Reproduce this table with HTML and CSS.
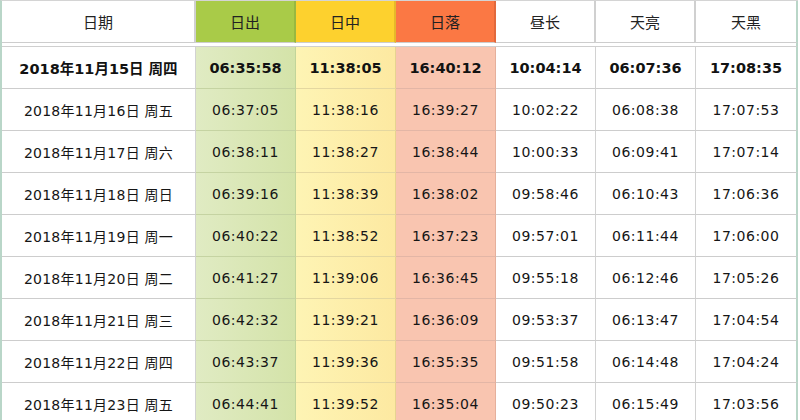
FILE: index.html
```html
<!DOCTYPE html>
<html lang="zh-CN">
<head>
<meta charset="utf-8">
<title>日出日落时间表</title>
<link rel="stylesheet" href="styles.css">
</head>
<body>
<table class="sun">
  <colgroup>
    <col class="c-date"><col class="c-t"><col class="c-t"><col class="c-t"><col class="c-t"><col class="c-t"><col class="c-last">
  </colgroup>
  <thead>
    <tr>
      <th>日期</th>
      <th class="h-rise">日出</th>
      <th class="h-noon">日中</th>
      <th class="h-set">日落</th>
      <th>昼长</th>
      <th>天亮</th>
      <th>天黑</th>
    </tr>
    <tr class="spacer"><td colspan="7"></td></tr>
  </thead>
  <tbody>
    <tr class="today">
      <td class="date">2018年11月15日 周四</td>
      <td class="rise">06:35:58</td><td class="noon">11:38:05</td><td class="set">16:40:12</td>
      <td>10:04:14</td><td>06:07:36</td><td>17:08:35</td>
    </tr>
    <tr>
      <td class="date">2018年11月16日 周五</td>
      <td class="rise">06:37:05</td><td class="noon">11:38:16</td><td class="set">16:39:27</td>
      <td>10:02:22</td><td>06:08:38</td><td>17:07:53</td>
    </tr>
    <tr>
      <td class="date">2018年11月17日 周六</td>
      <td class="rise">06:38:11</td><td class="noon">11:38:27</td><td class="set">16:38:44</td>
      <td>10:00:33</td><td>06:09:41</td><td>17:07:14</td>
    </tr>
    <tr>
      <td class="date">2018年11月18日 周日</td>
      <td class="rise">06:39:16</td><td class="noon">11:38:39</td><td class="set">16:38:02</td>
      <td>09:58:46</td><td>06:10:43</td><td>17:06:36</td>
    </tr>
    <tr>
      <td class="date">2018年11月19日 周一</td>
      <td class="rise">06:40:22</td><td class="noon">11:38:52</td><td class="set">16:37:23</td>
      <td>09:57:01</td><td>06:11:44</td><td>17:06:00</td>
    </tr>
    <tr>
      <td class="date">2018年11月20日 周二</td>
      <td class="rise">06:41:27</td><td class="noon">11:39:06</td><td class="set">16:36:45</td>
      <td>09:55:18</td><td>06:12:46</td><td>17:05:26</td>
    </tr>
    <tr>
      <td class="date">2018年11月21日 周三</td>
      <td class="rise">06:42:32</td><td class="noon">11:39:21</td><td class="set">16:36:09</td>
      <td>09:53:37</td><td>06:13:47</td><td>17:04:54</td>
    </tr>
    <tr>
      <td class="date">2018年11月22日 周四</td>
      <td class="rise">06:43:37</td><td class="noon">11:39:36</td><td class="set">16:35:35</td>
      <td>09:51:58</td><td>06:14:48</td><td>17:04:24</td>
    </tr>
    <tr>
      <td class="date">2018年11月23日 周五</td>
      <td class="rise">06:44:41</td><td class="noon">11:39:52</td><td class="set">16:35:04</td>
      <td>09:50:23</td><td>06:15:49</td><td>17:03:56</td>
    </tr>
  </tbody>
</table>
</body>
</html>
```

FILE: styles.css
```css
html, body {
  margin: 0;
  padding: 0;
  background: #ffffff;
  overflow: hidden;
}

body {
  font-family: "DejaVu Sans", "Noto Sans CJK SC", sans-serif;
  color: #161616;
}

.sun {
  border-collapse: separate;
  border-spacing: 0;
  table-layout: fixed;
  width: 796px;
  margin-left: 0;
  border-top: 1px solid #d4d4d4;
  border-left: 2px solid #b9d6c8;
}

.c-date { width: 194px; }
.c-t { width: 100px; }
.c-last { width: 102px; }

.sun th,
.sun td {
  padding: 0;
  text-align: center;
  vertical-align: middle;
  border-right: 1px solid #d2d2d2;
  border-bottom: 1px solid #cdcdcd;
  white-space: nowrap;
}

.sun th:last-child,
.sun td:last-child {
  border-right: 2px solid #b9d6c8;
}

.sun th {
  height: 41px;
  font-family: "Noto Sans CJK SC", "DejaVu Sans", sans-serif;
  font-weight: normal;
  font-size: 15px;
  color: #222222;
  border-right: 2px solid #d0d0d0;
}

.sun th.h-rise { background: #a9cb48; border-right-color: #98b840; }
.sun th.h-noon { background: #fdd12e; border-right-color: #e6b82a; }
.sun th.h-set  { background: #fb7844; border-right-color: #e2693c; }

.spacer td {
  height: 3px;
  border-right: none;
  border-bottom: 1px solid #cfcfcf;
  background: #ffffff;
}

.spacer td:last-child {
  border-right: 2px solid #b9d6c8;
}

.sun tbody td {
  height: 41px;
  font-size: 14px;
  letter-spacing: 0.5px;
}

.sun tbody td.date {
  letter-spacing: 0.25px;
}

.sun td.rise {
  background: linear-gradient(90deg, #e0ebc3, #d4e3a9);
  border-right-color: #c2d49a;
  border-bottom-color: #c5d3a2;
}

.sun td.noon {
  background: linear-gradient(90deg, #fef4b4, #fde9a1);
  border-right-color: #e6d390;
  border-bottom-color: #e4d7a0;
}

.sun td.set {
  background: #f9c5b0;
  border-right-color: #e5b09c;
  border-bottom-color: #e3b6a6;
}

.sun tr.today td {
  font-weight: bold;
  font-size: 14.5px;
  letter-spacing: 0;
  color: #121212;
}
```
